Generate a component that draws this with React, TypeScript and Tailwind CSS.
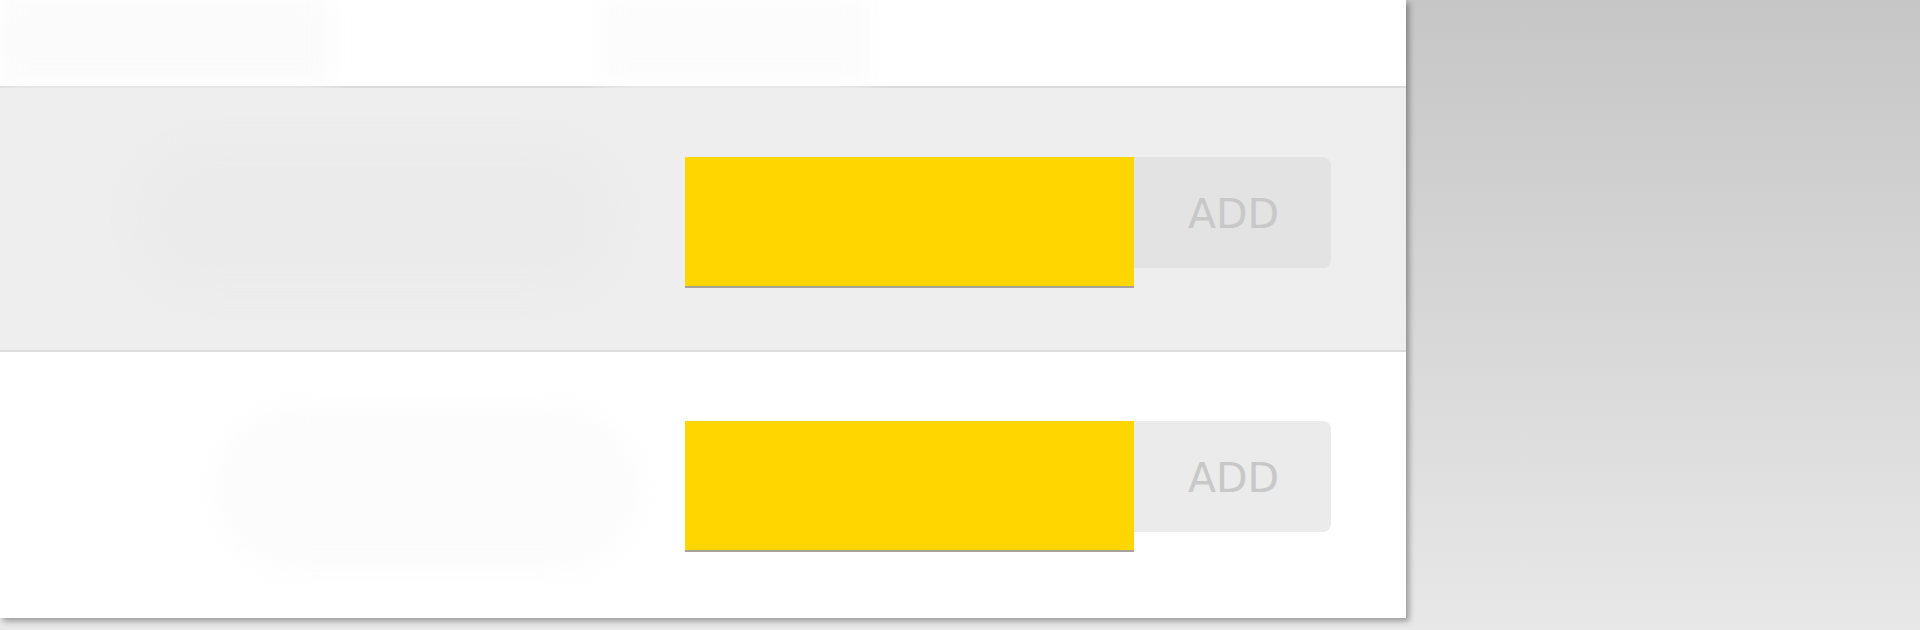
import React from "react";

const AddRow = ({ shaded }: { shaded?: boolean }) => {
  return (
    <div
      className={
        "relative flex justify-end pr-[75px] pt-[69px] " +
        (shaded ? "h-[264px] bg-[#eeeeee] border-b-2 border-[#dcdcdc]" : "flex-1 bg-white")
      }
    >
      {/* faint blurred placeholder */}
      <div
        className={
          "absolute rounded-full blur-md " +
          (shaded
            ? "left-[135px] top-[55px] w-[480px] h-[150px] bg-[#ebebeb]"
            : "left-[215px] top-[55px] w-[425px] h-[165px] bg-[#fcfcfc]")
        }
      />
      <div className="relative flex items-start">
        <div className="w-[449px] h-[131px] bg-[#ffd600] border-b-2 border-[#a8a39a]" />
        <button
          className={
            "w-[197px] h-[111px] rounded-r-lg flex items-center justify-center pt-[3px] pl-[2px] text-[41px] leading-none text-[#c8c8c8] font-['DejaVu_Sans',sans-serif] " +
            (shaded ? "bg-[#e3e3e3]" : "bg-[#ebebeb]")
          }
        >
          ADD
        </button>
      </div>
    </div>
  );
};

export default function App() {
  return (
    <div className="w-[1920px] h-[630px] overflow-hidden bg-gradient-to-b from-[#c6c6c6] to-[#e8e8e8]">
      <div className="w-[1406px] h-[618px] bg-white flex flex-col shadow-[3px_3px_6px_rgba(0,0,0,0.35)]">
        <div className="relative h-[88px] border-b-2 border-[#dcdcdc] bg-white">
          <div className="absolute left-0 top-0 w-[330px] h-[82px] bg-[#fbfbfb] blur-md" />
          <div className="absolute left-[600px] top-0 w-[270px] h-[82px] bg-[#fcfcfc] blur-md" />
        </div>
        <AddRow shaded />
        <AddRow />
      </div>
    </div>
  );
}
